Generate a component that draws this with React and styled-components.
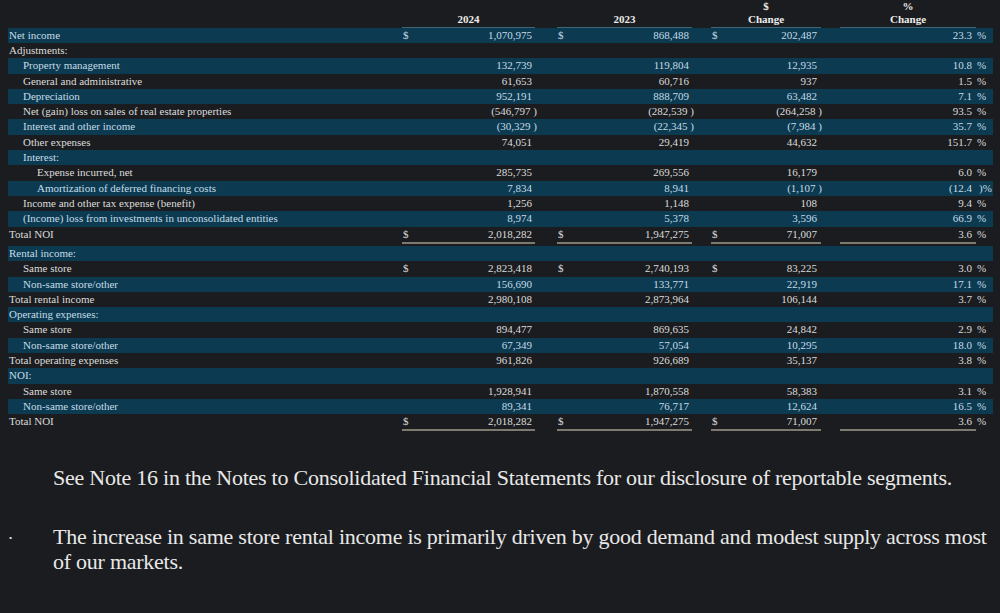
import styled, { createGlobalStyle } from "styled-components";

const GlobalStyle = createGlobalStyle`
  html, body {
    margin: 0;
    padding: 0;
    background: #1b1c1f;
  }
  body {
    font-family: "Liberation Serif", "Times New Roman", serif;
    color: #dcdcdc;
  }
`;

const Page = styled.div`
  width: 1000px;
  height: 613px;
  overflow: hidden;
  padding: 0 7px 0 8px;
  box-sizing: border-box;
`;

const Table = styled.table`
  width: 985px;
  table-layout: fixed;
  border-collapse: collapse;
  border-spacing: 0;
  font-size: 11px;
  line-height: 15px;
`;

const HeadRow = styled.tr`
  height: 26.7px;
`;

const HeadCell = styled.th`
  padding: 0 0 1px;
  vertical-align: bottom;
  text-align: center;
  font-weight: bold;
  font-size: 11px;
  line-height: 13px;
  color: #ececec;
  border-bottom: 1px solid ${(p) => (p.$line ? "#3e6878" : "transparent")};
`;

const Row = styled.tr`
  height: ${(p) => (p.$total ? "19.4px" : "15.3px")};
  background: ${(p) => (p.$striped ? "#0c3a51" : "transparent")};
  color: ${(p) => (p.$striped ? "#c4dce7" : "#dcdcdc")};
`;

const Label = styled.td`
  padding: 0 0 0 ${(p) => 1 + p.$level * 14}px;
  vertical-align: top;
  white-space: nowrap;
  line-height: 15px;
`;

const Cell = styled.td`
  padding: 0;
  vertical-align: top;
  line-height: 15px;
`;

const Money = styled.div`
  display: flex;
  justify-content: space-between;
  height: ${(p) => (p.$total ? "15px" : "auto")};
  padding: 0 ${(p) => p.$pad}px 0 1px;
  border-bottom: ${(p) => (p.$total ? "2px solid #7f7a70" : "none")};
  white-space: nowrap;
`;

const Paren = styled.span`
  margin-right: -5px;
`;

const Suffix = styled.div`
  padding-left: ${(p) => (p.$neg ? 3 : 1)}px;
  white-space: pre;
`;

const Notes = styled.div`
  margin-top: 31px;
  font-size: 22px;
  letter-spacing: -0.25px;
  line-height: 25px;
  color: #e8e8e8;
`;

const Note = styled.div`
  display: grid;
  grid-template-columns: 45px 942px;
  margin-bottom: 34px;
`;

const Bullet = styled.span`
  font-size: 9px;
  line-height: 29px;
  padding-left: 1px;
`;

const rows = [
  { label: "Net income", level: 0, cur: true, v: ["1,070,975", "868,488", "202,487"], pct: "23.3" },
  { label: "Adjustments:", level: 0 },
  { label: "Property management", level: 1, v: ["132,739", "119,804", "12,935"], pct: "10.8" },
  { label: "General and administrative", level: 1, v: ["61,653", "60,716", "937"], pct: "1.5" },
  { label: "Depreciation", level: 1, v: ["952,191", "888,709", "63,482"], pct: "7.1" },
  { label: "Net (gain) loss on sales of real estate properties", level: 1, v: ["-546,797", "-282,539", "-264,258"], pct: "93.5" },
  { label: "Interest and other income", level: 1, v: ["-30,329", "-22,345", "-7,984"], pct: "35.7" },
  { label: "Other expenses", level: 1, v: ["74,051", "29,419", "44,632"], pct: "151.7" },
  { label: "Interest:", level: 1 },
  { label: "Expense incurred, net", level: 2, v: ["285,735", "269,556", "16,179"], pct: "6.0" },
  { label: "Amortization of deferred financing costs", level: 2, v: ["7,834", "8,941", "-1,107"], pct: "-12.4" },
  { label: "Income and other tax expense (benefit)", level: 1, v: ["1,256", "1,148", "108"], pct: "9.4" },
  { label: "(Income) loss from investments in unconsolidated entities", level: 1, v: ["8,974", "5,378", "3,596"], pct: "66.9" },
  { label: "Total NOI", level: 0, cur: true, total: true, v: ["2,018,282", "1,947,275", "71,007"], pct: "3.6" },
  { label: "Rental income:", level: 0 },
  { label: "Same store", level: 1, cur: true, v: ["2,823,418", "2,740,193", "83,225"], pct: "3.0" },
  { label: "Non-same store/other", level: 1, v: ["156,690", "133,771", "22,919"], pct: "17.1" },
  { label: "Total rental income", level: 0, v: ["2,980,108", "2,873,964", "106,144"], pct: "3.7" },
  { label: "Operating expenses:", level: 0 },
  { label: "Same store", level: 1, v: ["894,477", "869,635", "24,842"], pct: "2.9" },
  { label: "Non-same store/other", level: 1, v: ["67,349", "57,054", "10,295"], pct: "18.0" },
  { label: "Total operating expenses", level: 0, v: ["961,826", "926,689", "35,137"], pct: "3.8" },
  { label: "NOI:", level: 0 },
  { label: "Same store", level: 1, v: ["1,928,941", "1,870,558", "58,383"], pct: "3.1" },
  { label: "Non-same store/other", level: 1, v: ["89,341", "76,717", "12,624"], pct: "16.5" },
  { label: "Total NOI", level: 0, cur: true, total: true, v: ["2,018,282", "1,947,275", "71,007"], pct: "3.6" },
];

const pads = [3, 3, 4];

function Amount({ value }) {
  if (value.startsWith("-")) {
    return (
      <span>
        ({value.slice(1)}
        <Paren> )</Paren>
      </span>
    );
  }
  return <span>{value}</span>;
}

function MoneyCell({ value, cur, total, pad }) {
  return (
    <Cell>
      {value && (
        <Money $total={total} $pad={pad}>
          <span>{cur ? "$" : ""}</span>
          <Amount value={value} />
        </Money>
      )}
    </Cell>
  );
}

export default function App() {
  return (
    <Page>
      <GlobalStyle />
      <Table>
        <colgroup>
          <col style={{ width: 394 }} />
          <col style={{ width: 133 }} />
          <col style={{ width: 22 }} />
          <col style={{ width: 135 }} />
          <col style={{ width: 19 }} />
          <col style={{ width: 110 }} />
          <col style={{ width: 19 }} />
          <col style={{ width: 136 }} />
          <col style={{ width: 17 }} />
        </colgroup>
        <thead>
          <HeadRow>
            <HeadCell />
            <HeadCell $line>2024</HeadCell>
            <HeadCell />
            <HeadCell $line>2023</HeadCell>
            <HeadCell />
            <HeadCell $line>
              $<br />
              Change
            </HeadCell>
            <HeadCell />
            <HeadCell $line>
              %<br />
              Change
            </HeadCell>
            <HeadCell />
          </HeadRow>
        </thead>
        <tbody>
          {rows.map((r, i) => {
            const neg = r.pct && r.pct.startsWith("-");
            return (
              <Row key={i} $striped={i % 2 === 0} $total={r.total}>
                <Label $level={r.level}>{r.label}</Label>
                <MoneyCell value={r.v && r.v[0]} cur={r.cur} total={r.total} pad={pads[0]} />
                <Cell />
                <MoneyCell value={r.v && r.v[1]} cur={r.cur} total={r.total} pad={pads[1]} />
                <Cell />
                <MoneyCell value={r.v && r.v[2]} cur={r.cur} total={r.total} pad={pads[2]} />
                <Cell />
                <Cell>
                  {r.pct && (
                    <Money $total={r.total} $pad={4}>
                      <span />
                      <span>{neg ? "(" + r.pct.slice(1) : r.pct}</span>
                    </Money>
                  )}
                </Cell>
                <Cell>{r.pct && <Suffix $neg={neg}>{neg ? ")%" : "%"}</Suffix>}</Cell>
              </Row>
            );
          })}
        </tbody>
      </Table>
      <Notes>
        <Note>
          <span />
          <span>
            See Note 16 in the Notes to Consolidated Financial Statements for our disclosure of reportable segments.
          </span>
        </Note>
        <Note>
          <Bullet>•</Bullet>
          <span>
            The increase in same store rental income is primarily driven by good demand and modest supply across most
            of our markets.
          </span>
        </Note>
      </Notes>
    </Page>
  );
}
